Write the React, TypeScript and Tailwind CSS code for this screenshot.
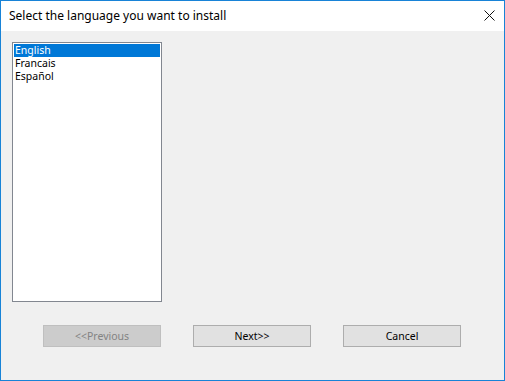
import React from "react"

const languages = ["English", "Francais", "Español"]

const WinButton = ({ label, disabled }: { label: string, disabled?: boolean }) => {
    return (
        <div
            className={
                disabled
                    ? "w-[118px] h-[22px] flex items-center justify-center border border-[#bfbfbf] bg-[#cccccc] text-[#838383]"
                    : "w-[118px] h-[22px] flex items-center justify-center border border-[#adadad] bg-[#e1e1e1] text-black"
            }
        >
            <span className="text-[10.5px] leading-none">{label}</span>
        </div>
    )
}

export default function App() {
    const [selected, setSelected] = React.useState(0)

    return (
        <div
            className="w-[505px] h-[381px] flex flex-col border border-[#1883d7] bg-[#f0f0f0] overflow-hidden"
            style={{ fontFamily: '"Noto Sans", "Liberation Sans", sans-serif' }}
        >
            {/* title bar */}
            <div className="h-[30px] shrink-0 bg-white flex items-center justify-between pl-[8px] pr-[9px]">
                <span className="text-[12px] text-black">
                    Select the language you want to install
                </span>
                <svg width="11" height="11" viewBox="0 0 11 11" className="mt-[-1px]">
                    <path d="M0.5 0.5 L10.5 10.5 M10.5 0.5 L0.5 10.5" stroke="#111" strokeWidth="1" fill="none" />
                </svg>
            </div>

            {/* body */}
            <div className="flex flex-col flex-1 pt-[11px] pl-[11px]">
                <div className="w-[150px] h-[260px] border border-[#828790] bg-white p-[1px]">
                    {languages.map((lang, i) => (
                        <div
                            key={lang}
                            onClick={() => setSelected(i)}
                            className={
                                i === selected
                                    ? "h-[13px] pl-[1px] flex items-center bg-[#0078d7] text-white text-[10.5px]"
                                    : "h-[13px] pl-[1px] flex items-center text-black text-[10.5px]"
                            }
                        >
                            {lang}
                        </div>
                    ))}
                </div>

                <div className="flex gap-[32px] mt-[23px] pl-[31px]">
                    <WinButton label="<<Previous" disabled />
                    <WinButton label="Next>>" />
                    <WinButton label="Cancel" />
                </div>
            </div>
        </div>
    )
}
